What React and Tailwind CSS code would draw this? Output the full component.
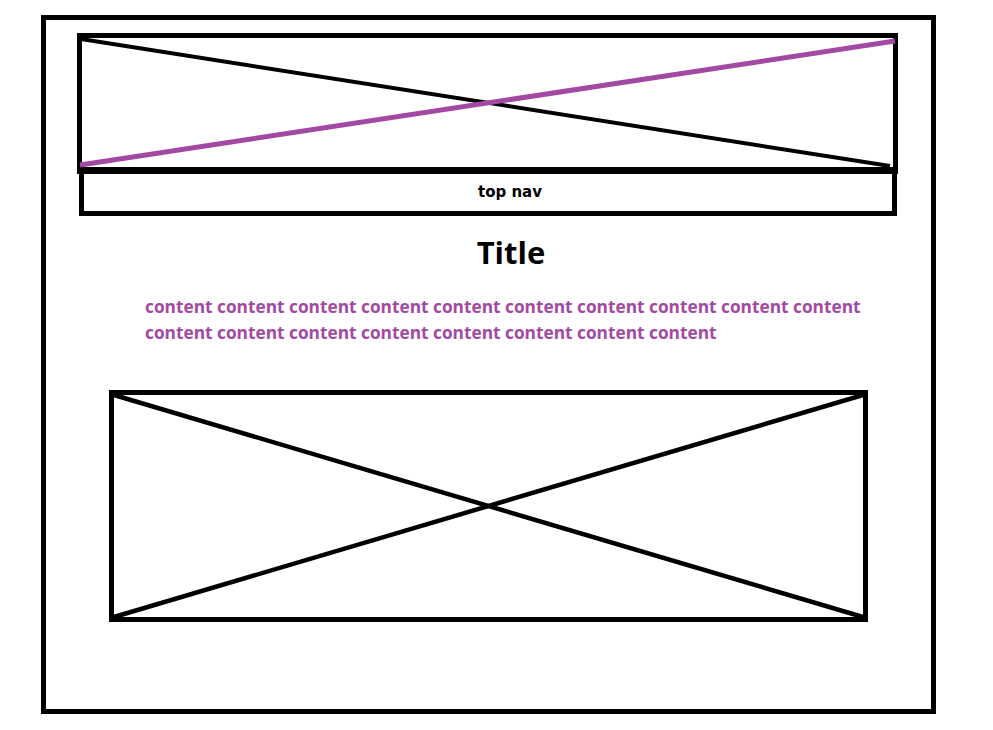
import React from 'react';

const SANS = { fontFamily: '"Open Sans", "Noto Sans", sans-serif' };

// placeholder box with an X across it, lines drawn corner to corner
const Cross = ({ w, h, lines }) => (
  <svg
    className="absolute inset-0 overflow-visible"
    width={w}
    height={h}
    viewBox={`0 0 ${w} ${h}`}
  >
    {lines.map((l, i) => (
      <line
        key={i}
        x1={l[0]}
        y1={l[1]}
        x2={l[2]}
        y2={l[3]}
        stroke={l[4]}
        strokeWidth={l[5]}
      />
    ))}
  </svg>
);

const App = () => {
  return (
    <div className="min-h-[730px] w-[993px] bg-white" style={SANS}>
      <div className="pt-[15px] pl-[41px]">
        <div className="w-[895px] h-[699px] border-[5px] border-black flex flex-col">
          {/* banner + top nav */}
          <div className="ml-[31px] mt-[13px] w-[821px]">
            <div className="relative h-[141px] border-[5px] border-b-[7px] border-black">
              <Cross
                w={811}
                h={129}
                lines={[
                  [-1, 1, 808, 128, '#000', 4],
                  [-2, 127, 813, 3, '#a349a4', 5],
                ]}
              />
            </div>
            <div className="ml-[2px] w-[818px] h-[42px] border-[5px] border-t-0 border-black flex items-center justify-center pl-[44px]">
              <span
                className="text-[15px] font-bold text-black leading-none"
                style={{ fontFamily: '"DejaVu Sans", "Liberation Sans", sans-serif' }}
              >
                top nav
              </span>
            </div>
          </div>

          {/* title */}
          <h1 className="mt-[17px] pl-[45px] text-center text-[31px] leading-[39px] font-bold text-black">
            Title
          </h1>

          {/* content */}
          <p className="mt-[22px] ml-[99px] w-[760px] text-[17.3px] leading-[26px] font-bold text-[#a349a4]">
            content content content content content content content content content content
            content content content content content content content content
          </p>

          {/* image placeholder */}
          <div className="relative mt-[44px] ml-[63px] w-[759px] h-[232px] border-[5px] border-black">
            <Cross
              w={749}
              h={222}
              lines={[
                [0, 0, 749, 222, '#000', 4.5],
                [0, 222, 749, 0, '#000', 4.5],
              ]}
            />
          </div>
        </div>
      </div>
    </div>
  );
};

export default App;
